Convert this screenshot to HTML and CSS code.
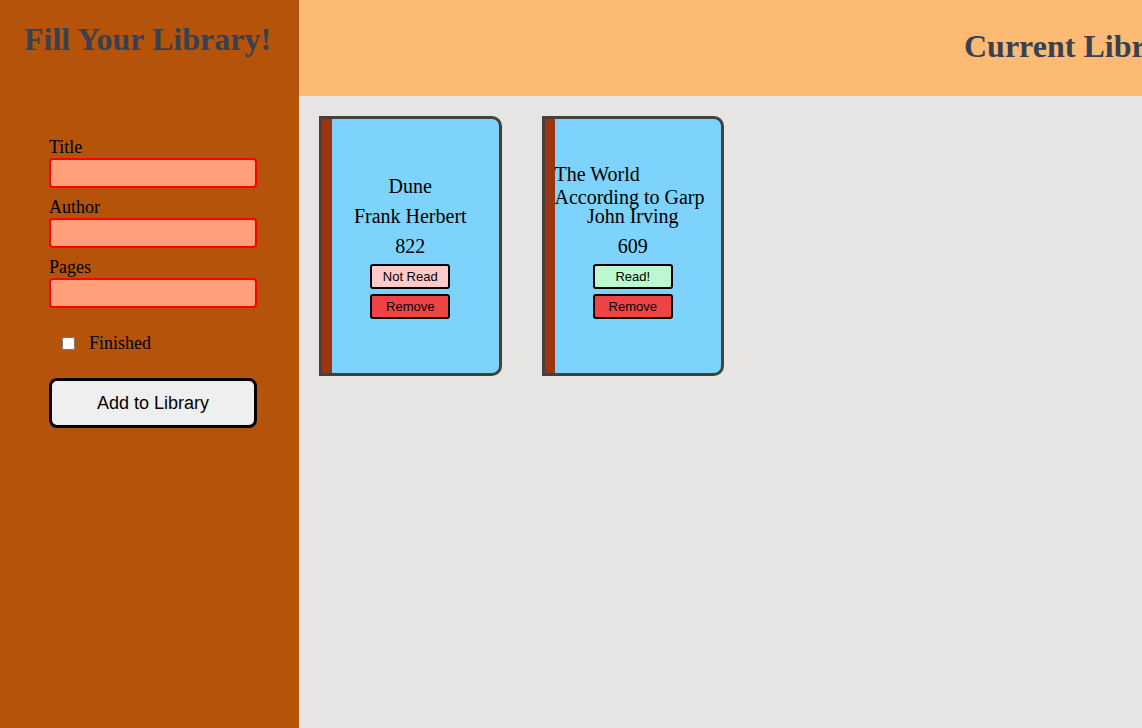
FILE: index.html
```html
<!DOCTYPE html>
<html>
<head>
<meta charset="utf-8">
<link rel="stylesheet" href="styles.css">
</head>
<body>
  <aside class="sidebar">
    <h1 class="side-title">Fill Your Library!</h1>
    <form class="book-form">
      <label class="field-label" for="title">Title</label>
      <input class="field-input" id="title" type="text">
      <label class="field-label" for="author">Author</label>
      <input class="field-input" id="author" type="text">
      <label class="field-label" for="pages">Pages</label>
      <input class="field-input" id="pages" type="text">
      <div class="check-row">
        <input class="check" id="finished" type="checkbox">
        <label class="check-label" for="finished">Finished</label>
      </div>
      <button class="add-btn" type="button">Add to Library</button>
    </form>
  </aside>
  <main class="main">
    <header class="header">
      <h1 class="header-title">Current Library</h1>
    </header>
    <section class="shelf">
      <div class="book">
        <div class="book-line">Dune</div>
        <div class="book-line">Frank Herbert</div>
        <div class="book-line">822</div>
        <button class="book-btn status-btn not-read" type="button">Not Read</button>
        <button class="book-btn remove-btn" type="button">Remove</button>
      </div>
      <div class="book">
        <div class="book-line">The World According to Garp</div>
        <div class="book-line">John Irving</div>
        <div class="book-line">609</div>
        <button class="book-btn status-btn read" type="button">Read!</button>
        <button class="book-btn remove-btn" type="button">Remove</button>
      </div>
    </section>
  </main>
</body>
</html>
```
FILE: styles.css
```css
html, body {
  margin: 0;
  padding: 0;
  height: 100%;
}
body {
  display: flex;
  overflow: hidden;
  font-family: "Liberation Serif", "Times New Roman", serif;
}
.sidebar {
  width: 299px;
  flex: 0 0 299px;
  background: #b45309;
  display: flex;
  flex-direction: column;
}
.side-title {
  margin: 21px 0 21px 0;
  padding-right: 4px;
  font-size: 32px;
  font-weight: bold;
  color: #374151;
  text-align: center;
  line-height: 37px;
}
.book-form {
  display: flex;
  flex-direction: column;
  align-items: flex-start;
  padding: 58px 0 0 49px;
}
.field-label {
  font-size: 18px;
  line-height: 21px;
  color: #000;
  margin-bottom: 0;
}
.field-input {
  box-sizing: border-box;
  width: 208px;
  height: 30px;
  border: 2px solid #ff0000;
  border-radius: 4px;
  background: #ffa07a;
  margin: 0 0 9px 0;
  padding: 0 4px;
}
.check-row {
  display: flex;
  align-items: center;
  margin-top: 16px;
  height: 21px;
}
.check {
  width: 13px;
  height: 13px;
  margin: 0 14px 0 13px;
}
.check-label {
  font-size: 18px;
  line-height: 21px;
}
.add-btn {
  margin-top: 24px;
  box-sizing: border-box;
  width: 208px;
  height: 50px;
  border: 3px solid #000;
  border-radius: 8px;
  background: #efefef;
  font-family: "Liberation Sans", Arial, sans-serif;
  font-size: 18px;
  color: #000;
}
.main {
  flex: 1;
  display: flex;
  flex-direction: column;
  background: #e7e5e4;
  min-width: 0;
}
.header {
  box-sizing: border-box;
  height: 96px;
  flex: 0 0 96px;
  background: #fdba74;
  display: flex;
  align-items: center;
  padding: 0 0 4px 665px;
  overflow: hidden;
  white-space: nowrap;
}
.header-title {
  margin: 0;
  font-size: 32px;
  font-weight: bold;
  line-height: 37px;
  color: #374151;
}
.shelf {
  display: flex;
  align-items: flex-start;
  gap: 40px;
  padding: 20px;
}
.book {
  box-sizing: border-box;
  width: 182.5px;
  height: 260px;
  border: 3px solid #44403c;
  border-radius: 0 10px 10px 0;
  background: #7dd3fc;
  box-shadow: inset 10px 0 0 #9a3412;
  padding: 0 10px 2px 10px;
  display: flex;
  flex-direction: column;
  align-items: center;
  justify-content: center;
}
.book-line {
  height: 30px;
  display: flex;
  align-items: center;
  font-size: 20px;
  line-height: 23px;
  color: #000;
}
.book-btn {
  box-sizing: border-box;
  width: 80px;
  height: 25px;
  border: 2px solid #000;
  border-radius: 3px;
  font-family: "Liberation Sans", Arial, sans-serif;
  font-size: 13px;
  color: #000;
  padding: 0;
}
.status-btn {
  margin-top: 3px;
}
.remove-btn {
  margin-top: 5px;
  background: #ef4444;
}
.not-read {
  background: #fecaca;
}
.read {
  background: #bbf7d0;
}
```
